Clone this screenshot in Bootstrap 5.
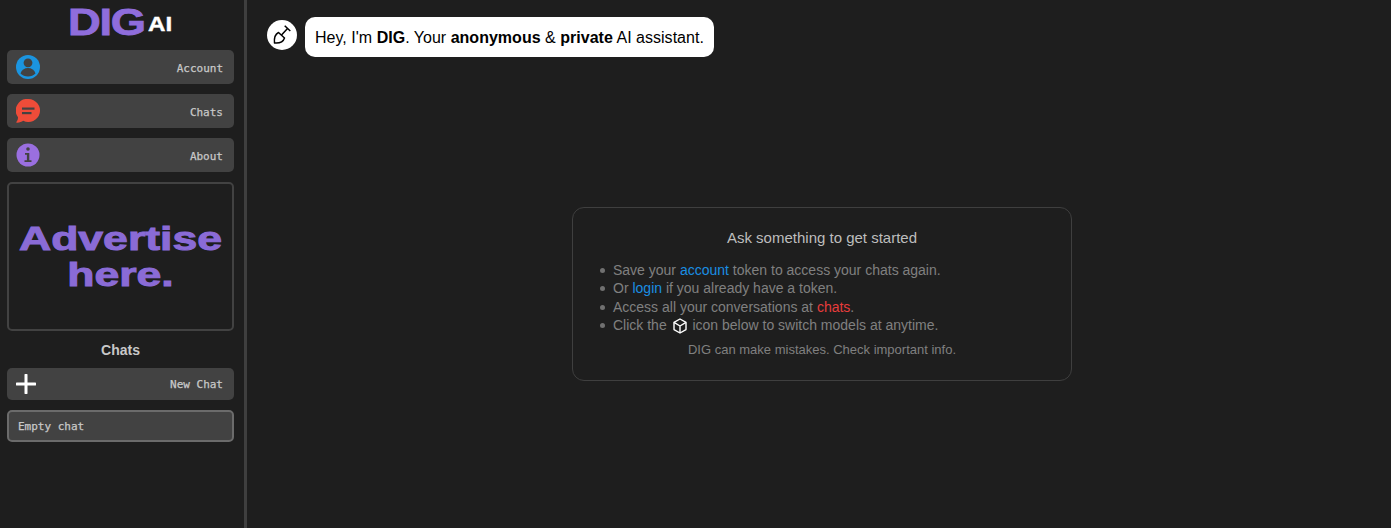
<!DOCTYPE html>
<html lang="en">
<head>
  <meta charset="UTF-8" />
  <meta name="viewport" content="width=device-width, initial-scale=1.0" />
  <title>DIG AI</title>
  <link href="https://cdn.jsdelivr.net/npm/bootstrap@5.3.0/dist/css/bootstrap.min.css" rel="stylesheet" />
  <style>
    html, body { height: 100%; }
    body {
      background: #1e1e1e;
      font-family: "Liberation Sans", Arial, sans-serif;
      overflow: hidden;
    }

    .app-shell { height: 528px; }

    .side-panel {
      width: 247px;
      flex: none;
      border-right: 3px solid #3f3f3f;
      padding: 0 10px 0 7px;
    }

    .logo-row { height: 50px; padding-top: 5px; padding-right: 1px; }
    .logo-big, .logo-small {
      display: inline-block;
      font-weight: 700;
      line-height: 1;
      transform-origin: left bottom;
    }
    .logo-big { color: #8f6ddc; font-size: 36px; letter-spacing: -1px; width: 80px; transform: scaleX(1.26); -webkit-text-stroke: .8px #8f6ddc; }
    .logo-small { color: #fff; font-size: 21px; width: 25px; transform: scaleX(1.15); -webkit-text-stroke: .4px #fff; }

    .side-btn {
      height: 34px;
      margin-bottom: 10px;
      padding: 0 11px 0 9px;
      background: #424242;
      border-radius: 5px;
      color: #c8c8c8;
      font: 11px "DejaVu Sans Mono", monospace;
      -webkit-text-stroke: .25px #c8c8c8;
    }
    .side-btn span { padding-top: 2px; }
    .side-btn svg { flex: none; }

    .ad-box {
      height: 149px;
      margin-bottom: 10px;
      padding-bottom: 1px;
      border: 2px solid #424242;
      border-radius: 5px;
      color: #8a6bd6;
      font-size: 34px;
      font-weight: 700;
      line-height: 36px;
      text-align: center;
    }
    .ad-text { display: inline-block; white-space: nowrap; transform: scaleX(1.31); -webkit-text-stroke: 1px #8a6bd6; }

    .side-title {
      color: #c8c8c8;
      font-size: 14px;
      font-weight: 700;
      line-height: 18px;
      padding: 0 0 9px;
      margin-top: 10px;
      text-align: center;
    }

    .new-chat { height: 32px; }
    .new-chat span { padding-top: 0; }
    .chat-item {
      height: 32px;
      padding: 0 9px;
      background: #424242;
      border: 2px solid #6b6b6b;
      border-radius: 5px;
      color: #c8c8c8;
      font: 11px "DejaVu Sans Mono", monospace;
      -webkit-text-stroke: .25px #c8c8c8;
    }

    .main-panel { padding: 17px 0 0 20px; }

    .dig-avatar {
      width: 30px;
      height: 30px;
      margin-top: 3px;
      background: #fff;
      border-radius: 50%;
      flex: none;
    }
    .hello-bubble {
      height: 40px;
      margin-left: 8px;
      padding: 1px 10px 0;
      background: #fff;
      border-radius: 10px;
      color: #000;
      font-size: 16px;
      letter-spacing: .02px;
      line-height: 40px;
    }

    .start-card {
      width: 500px;
      height: 174px;
      margin: 150px 0 0 305px;
      padding: 21px 0 0;
      border: 1px solid #3f3f3f;
      border-radius: 12px;
      background: #1e1e1e;
      font-size: 14px;
      color: #808080;
    }
    .start-title {
      color: #bdbdbd;
      font-size: 15px;
      line-height: 18px;
      text-align: center;
      margin-bottom: 14px;
    }
    .tips-list {
      list-style: none;
      margin: 0 0 7px;
      padding: 0 0 0 40px;
      line-height: 18.4px;
    }
    .tips-list li::before {
      content: "";
      display: inline-block;
      width: 5px;
      height: 5px;
      margin: 0 8px 2px -13px;
      background: #707070;
      border-radius: 50%;
    }
    .tips-list svg { vertical-align: -4px; margin: 0 1px; }
    .link-blue { color: #1a8fe3; text-decoration: none; }
    .link-red { color: #e83c3c; text-decoration: none; }
    .start-note { font-size: 13px; line-height: 16px; text-align: center; }
  </style>
</head>
<body>
  <div class="app-shell d-flex">
    <aside class="side-panel">
      <div class="logo-row d-flex justify-content-center align-items-start">
        <span class="logo-big">DIG</span><span class="logo-small mt-2">AI</span>
      </div>

      <div class="side-btn d-flex align-items-center justify-content-between">
        <svg width="24" height="24" viewBox="0 0 24 24">
          <circle cx="12" cy="12" r="12" fill="#1b95e0"/>
          <circle cx="12" cy="7.800" r="4.400" fill="#424242"/>
          <path d="M4.500 18.500c1-3.600 4-5.500 7.500-5.500s6.500 1.900 7.500 5.500c-2 2-4.500 3-7.500 3s-5.500-1-7.500-3z" fill="#424242"/>
        </svg>
        <span>Account</span>
      </div>
      <div class="side-btn d-flex align-items-center justify-content-between">
        <svg width="24" height="24" viewBox="0 0 24 24">
          <path d="M12.500 0a11.500 11.500 0 1 1-5.300 21.700c-1.500 1-3.500 1.700-6 2.100-.8 0-1.100-.5-.7-1.100 1-1.300 1.500-2.700 1.500-4.500A11.500 11.500 0 0 1 12.500 0z" fill="#ee4c39"/>
          <rect x="6" y="8.500" width="12.500" height="2.200" fill="#424242"/>
          <rect x="6" y="13" width="9.500" height="2.200" fill="#424242"/>
        </svg>
        <span>Chats</span>
      </div>
      <div class="side-btn d-flex align-items-center justify-content-between">
        <svg width="24" height="24" viewBox="0 0 24 24">
          <circle cx="12" cy="12" r="11.500" fill="#9a6fe0"/>
          <circle cx="12" cy="6" r="1.800" fill="#424242"/>
          <path d="M9 10h4.300v7.200h2.200v1.800h-7v-1.800h2.400v-5.400H9z" fill="#424242"/>
        </svg>
        <span>About</span>
      </div>

      <div class="ad-box d-flex align-items-center justify-content-center">
        <span class="ad-text">Advertise<br />here.</span>
      </div>

      <div class="side-title">Chats</div>

      <div class="side-btn new-chat d-flex align-items-center justify-content-between">
        <svg width="20" height="20" viewBox="0 0 20 20">
          <path d="M10 1v18M1 10h18" stroke="#fff" stroke-width="3" stroke-linecap="round"/>
        </svg>
        <span>New Chat</span>
      </div>
      <div class="chat-item d-flex align-items-center">Empty chat</div>
    </aside>

    <main class="main-panel flex-grow-1">
      <div class="d-flex align-items-start">
        <div class="dig-avatar">
          <svg class="d-block" width="30" height="30" viewBox="0 0 30 30" fill="none" stroke="#000" stroke-width="1.500">
            <path d="M11.500 12.500L17.500 18C16.500 21 13 23.500 7.500 23 7 18 8.500 14 11.500 12.500z" stroke-linejoin="round"/>
            <path d="M14.500 15l6.500-7M17.700 5.700l5.600 5.300"/>
          </svg>
        </div>
        <div class="hello-bubble">Hey, I'm <b>DIG</b>. Your <b>anonymous</b> &amp; <b>private</b> AI assistant.</div>
      </div>

      <section class="start-card">
        <div class="start-title">Ask something to get started</div>
        <ul class="tips-list">
          <li>Save your <a class="link-blue" href="#">account</a> token to access your chats again.</li>
          <li>Or <a class="link-blue" href="#">login</a> if you already have a token.</li>
          <li>Access all your conversations at <a class="link-red" href="#">chats</a>.</li>
          <li>Click the
            <svg width="16" height="16" viewBox="0 0 16 16" fill="none" stroke="#fff" stroke-width="1.400" stroke-linejoin="round">
              <path d="M8 1l6 3.400v7.200L8 15l-6-3.400V4.400z"/>
              <path d="M2 4.400L8 8l6-3.600M8 8v7"/>
            </svg>
            icon below to switch models at anytime.</li>
        </ul>
        <div class="start-note">DIG can make mistakes. Check important info.</div>
      </section>
    </main>
  </div>

  <script src="https://cdn.jsdelivr.net/npm/bootstrap@5.3.0/dist/js/bootstrap.bundle.min.js"></script>
</body>
</html>
